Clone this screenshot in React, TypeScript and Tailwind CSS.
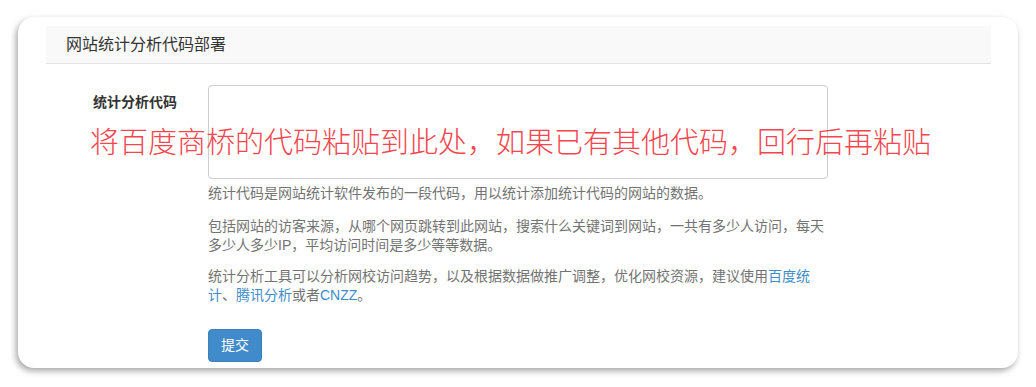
const font = { fontFamily: '"Liberation Sans", "Noto Sans CJK SC", sans-serif' };

export default function App() {
  return (
    <div className="w-[1036px] h-[387px] bg-white pt-[17px] pl-[18px] [text-spacing-trim:space-all]" style={font}>
      <div className="relative w-[1000px] h-[351px] bg-white rounded-[16px] shadow-[-2px_3px_6px_rgba(0,0,0,0.35)] pt-[9px] pl-[28px]">
        <div className="w-[945px] h-[38px] bg-[#f9f9f9] border-b border-[#e3e3e3] flex items-center px-5 text-[16px] text-[#333]">
          网站统计分析代码部署
        </div>

        <div className="flex mt-[21px]">
          <label className="w-[131px] text-right text-[14px] font-bold text-[#333] pt-[7px] leading-5">
            统计分析代码
          </label>
          <div className="ml-[31px] w-[620px]">
            <textarea className="block w-[620px] h-[94px] border border-[#ccc] rounded-[4px] resize-none bg-white" />
            <div className="mt-[5px] text-[14px] leading-[19px] text-[#737373]">
              <p className="mb-[14px]">统计代码是网站统计软件发布的一段代码，用以统计添加统计代码的网站的数据。</p>
              <p className="mb-[12px]">包括网站的访客来源，从哪个网页跳转到此网站，搜索什么关键词到网站，一共有多少人访问，每天多少人多少IP，平均访问时间是多少等等数据。</p>
              <p>
                统计分析工具可以分析网校访问趋势，以及根据数据做推广调整，优化网校资源，建议使用
                <a className="text-[#428bca]">百度统<br />计</a>、<a className="text-[#428bca]">腾讯分析</a>或者<a className="text-[#428bca]">CNZZ</a>。
              </p>
            </div>
            <button className="mt-[24px] w-[54px] h-[33px] rounded-[4px] bg-[#428bca] border border-[#3a80bd] text-white text-[14px]">
              提交
            </button>
          </div>
        </div>

        <div
          className="absolute left-[72px] top-[103px] text-[29px] leading-[40px] font-light text-[#f4464e] whitespace-nowrap"
          style={{ fontFamily: '"Noto Sans CJK SC", sans-serif' }}
        >
          将百度商桥的代码粘贴到此处，如果已有其他代码，回行后再粘贴
        </div>
      </div>
    </div>
  );
}
